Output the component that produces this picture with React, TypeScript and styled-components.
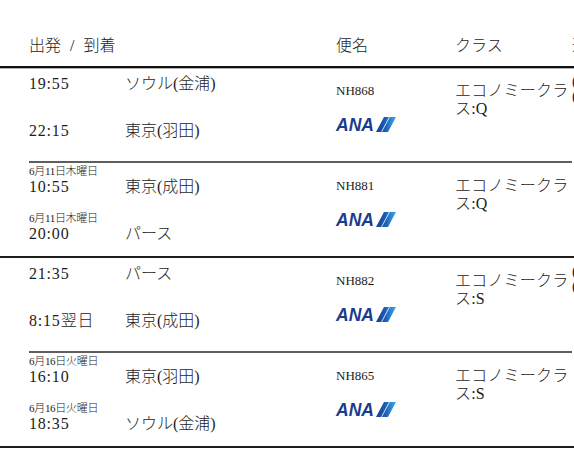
import React from 'react';
import styled, { createGlobalStyle } from 'styled-components';

const GlobalStyle = createGlobalStyle`
  html, body {
    margin: 0;
    padding: 0;
    background: #fff;
  }
  body {
    overflow: hidden;
    font-family: "Liberation Serif", "Noto Sans CJK JP", serif;
    color: #1c1c1c;
  }
`;

const Page = styled.div`
  width: 574px;
  height: 462px;
  overflow: hidden;
`;

const Table = styled.div`
  width: 800px;
`;

const HeaderRow = styled.div`
  display: flex;
  padding: 36px 0 10px 29px;
  border-bottom: 2px solid #111;
  box-shadow: 0 1px 0 #b0b0b0;
  font-size: 16px;
  line-height: 20px;
  font-weight: 300;
`;

interface IColumn {
  width: number;
  spread?: boolean;
}

const HeadCell = styled.div<IColumn>`
  flex: 0 0 ${(p) => p.width}px;
  white-space: pre;
  word-spacing: ${(p) => (p.spread ? '5px' : 'normal')};
`;

const Journey = styled.div`
  display: flex;
  border-bottom: 2px solid #1e1e1e;
`;

const Gutter = styled.div`
  flex: 0 0 29px;
`;

const Segments = styled.div`
  flex: 0 0 543px;
  display: flex;
  flex-direction: column;
`;

const Segment = styled.div`
  display: flex;
  height: 93px;

  &:not(:last-child) {
    border-bottom: 2px solid #5e5e5e;
  }
`;

const Stops = styled.div`
  flex: 0 0 307px;
  display: flex;
  flex-direction: column;
`;

interface IStop {
  hasDate: boolean;
}

const Stop = styled.div<IStop>`
  display: grid;
  grid-template-columns: 96px 1fr;
  grid-template-rows: auto 20px;
  align-content: start;
  height: 47px;
  box-sizing: border-box;
  padding-top: ${(p) => (p.hasDate ? 2 : 6)}px;

  &:last-child {
    height: 46px;
  }
`;

const DateLine = styled.div`
  grid-column: 1 / 3;
  font-size: 11px;
  line-height: 12px;
  font-weight: 300;
  letter-spacing: -0.3px;
`;

const Time = styled.div`
  grid-column: 1;
  grid-row: 2;
  font-size: 16px;
  line-height: 20px;
  font-weight: 300;
  letter-spacing: 0.8px;
  white-space: nowrap;
`;

const City = styled.div`
  grid-column: 2;
  grid-row: 2;
  font-size: 16px;
  line-height: 20px;
  font-weight: 300;
  white-space: nowrap;
`;

const FlightCell = styled.div`
  flex: 0 0 119px;
  display: flex;
  flex-direction: column;
  align-items: flex-start;
  gap: 19px;
  padding-top: 16px;
  box-sizing: border-box;
`;

const FlightNo = styled.div`
  font-size: 13px;
  line-height: 14px;
`;

const LogoSvg = styled.svg`
  display: block;
  overflow: visible;
`;

const ClassCell = styled.div`
  flex: 0 0 117px;
  padding-top: 14px;
  font-size: 16px;
  line-height: 18px;
  font-weight: 300;
  letter-spacing: 0.2px;
  word-break: break-all;
`;

const FareCell = styled.div`
  flex: 1;
  padding-top: 6px;
  font-size: 15px;
  line-height: 15px;
  font-weight: 300;
`;

const AnaLogo = () => (
  <LogoSvg width="62" height="20" viewBox="0 0 62 20">
    <defs>
      <linearGradient id="anaSky" x1="0" y1="0" x2="1" y2="0">
        <stop offset="0" stopColor="#1a3b8e" />
        <stop offset="0.45" stopColor="#1d5cb4" />
        <stop offset="1" stopColor="#3aaaea" />
      </linearGradient>
    </defs>
    <text
      x="0"
      y="14"
      fontFamily="Liberation Sans, Arial, sans-serif"
      fontWeight="bold"
      fontStyle="italic"
      fontSize="17.5"
      fill="#1a3b8e"
    >
      ANA
    </text>
    <polygon points="40,15 48,0 60,0 52,15" fill="url(#anaSky)" />
    <line x1="45.5" y1="15" x2="53.5" y2="0" stroke="#fff" strokeWidth="0.8" />
  </LogoSvg>
);

interface IStopData {
  date?: string;
  time: string;
  city: string;
}

interface ISegmentData {
  dep: IStopData;
  arr: IStopData;
  flight: string;
  cls: string;
}

interface IJourneyData {
  fare: string[];
  segments: ISegmentData[];
}

const journeys: IJourneyData[] = [
  {
    fare: ['(大人)', '(小児)'],
    segments: [
      {
        dep: { time: '19:55', city: 'ソウル(金浦)' },
        arr: { time: '22:15', city: '東京(羽田)' },
        flight: 'NH868',
        cls: 'エコノミークラス:Q',
      },
      {
        dep: { date: '6月11日木曜日', time: '10:55', city: '東京(成田)' },
        arr: { date: '6月11日木曜日', time: '20:00', city: 'パース' },
        flight: 'NH881',
        cls: 'エコノミークラス:Q',
      },
    ],
  },
  {
    fare: ['(大人)', '(小児)'],
    segments: [
      {
        dep: { time: '21:35', city: 'パース' },
        arr: { time: '8:15翌日', city: '東京(成田)' },
        flight: 'NH882',
        cls: 'エコノミークラス:S',
      },
      {
        dep: { date: '6月16日火曜日', time: '16:10', city: '東京(羽田)' },
        arr: { date: '6月16日火曜日', time: '18:35', city: 'ソウル(金浦)' },
        flight: 'NH865',
        cls: 'エコノミークラス:S',
      },
    ],
  },
];

const StopRow = ({ stop }: { stop: IStopData }) => (
  <Stop hasDate={!!stop.date}>
    {stop.date && <DateLine>{stop.date}</DateLine>}
    <Time>{stop.time}</Time>
    <City>{stop.city}</City>
  </Stop>
);

const App = () => (
  <Page>
    <GlobalStyle />
    <Table>
      <HeaderRow>
        <HeadCell width={307} spread>出発 / 到着</HeadCell>
        <HeadCell width={119}>便名</HeadCell>
        <HeadCell width={117}>クラス</HeadCell>
        <HeadCell width={200}>運賃</HeadCell>
      </HeaderRow>
      {journeys.map((j, ji) => (
        <Journey key={ji}>
          <Gutter />
          <Segments>
            {j.segments.map((s) => (
              <Segment key={s.flight}>
                <Stops>
                  <StopRow stop={s.dep} />
                  <StopRow stop={s.arr} />
                </Stops>
                <FlightCell>
                  <FlightNo>{s.flight}</FlightNo>
                  <AnaLogo />
                </FlightCell>
                <ClassCell>{s.cls}</ClassCell>
              </Segment>
            ))}
          </Segments>
          <FareCell>
            {j.fare.map((f) => (
              <div key={f}>{f}</div>
            ))}
          </FareCell>
        </Journey>
      ))}
    </Table>
  </Page>
);

export default App;
